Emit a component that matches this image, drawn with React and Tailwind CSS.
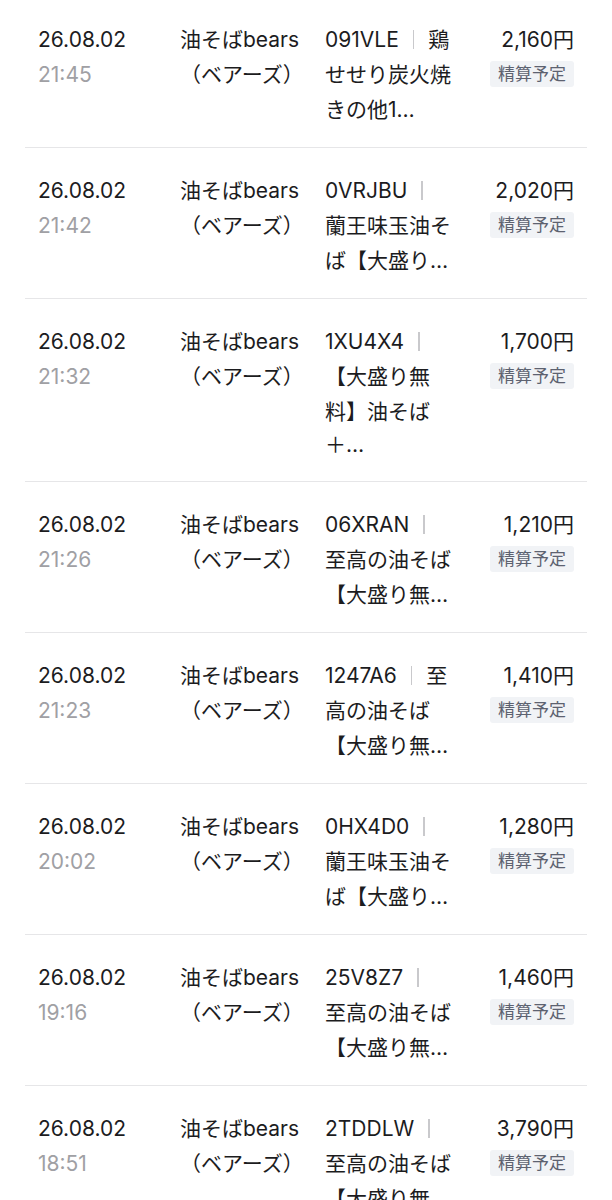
import React from 'react';

const rows = [
  { time: '21:45', code: '091VLE', desc: ['鶏', 'せせり炭火焼', 'きの他1…'], price: '2,160' },
  { time: '21:42', code: '0VRJBU', desc: ['', '蘭王味玉油そ', 'ば【大盛り…'], price: '2,020' },
  { time: '21:32', code: '1XU4X4', desc: ['', '【大盛り無', '料】油そば', '＋…'], price: '1,700' },
  { time: '21:26', code: '06XRAN', desc: ['', '至高の油そば', '【大盛り無…'], price: '1,210' },
  { time: '21:23', code: '1247A6', desc: ['至', '高の油そば', '【大盛り無…'], price: '1,410' },
  { time: '20:02', code: '0HX4D0', desc: ['', '蘭王味玉油そ', 'ば【大盛り…'], price: '1,280' },
  { time: '19:16', code: '25V8Z7', desc: ['', '至高の油そば', '【大盛り無…'], price: '1,460' },
  { time: '18:51', code: '2TDDLW', desc: ['', '至高の油そば', '【大盛り無…'], price: '3,790' },
];

const Row = ({ row }) => {
  const [first, ...rest] = row.desc;
  return (
    <div className="grid grid-cols-[142px_145px_140px_1fr] border-t border-[#e6e6e8] pt-[25px] pb-[20px] pl-[13px] pr-[13px] text-[21px] leading-[35px] text-[#1c1c1e]">
      <div className="flex flex-col">
        <span>26.08.02</span>
        <span className="text-[#a0a0a4]">{row.time}</span>
      </div>
      <div className="flex flex-col">
        <span>油そばbears</span>
        <span>（ベアーズ）</span>
      </div>
      <div className="flex flex-col">
        <span className="flex items-center whitespace-nowrap">
          {row.code}
          <span className="inline-block w-[1.5px] h-[19px] bg-[#c9c9cc] mx-[14px]" />
          {first}
        </span>
        {rest.map((line, i) => (
          // the fourth line sits a little tighter than the rest
          <span key={i} className={i === 2 ? 'whitespace-nowrap leading-[32px]' : 'whitespace-nowrap'}>
            {line}
          </span>
        ))}
      </div>
      <div className="flex flex-col items-end">
        <span>{row.price}円</span>
        <span className="mt-[4px] rounded-[3px] bg-[#f1f3f6] px-[8px] leading-[26px] text-[17px] text-[#5d6270]">精算予定</span>
      </div>
    </div>
  );
};

export default function App() {
  return (
    <div
      className="w-[612px] h-[1200px] overflow-hidden bg-white"
      style={{ fontFamily: 'Inter, "Noto Sans CJK JP", sans-serif' }}
    >
      <div className="mx-[25px] mt-[-4px]">
        {rows.map((row, i) => (
          <Row key={i} row={row} />
        ))}
      </div>
    </div>
  );
}
